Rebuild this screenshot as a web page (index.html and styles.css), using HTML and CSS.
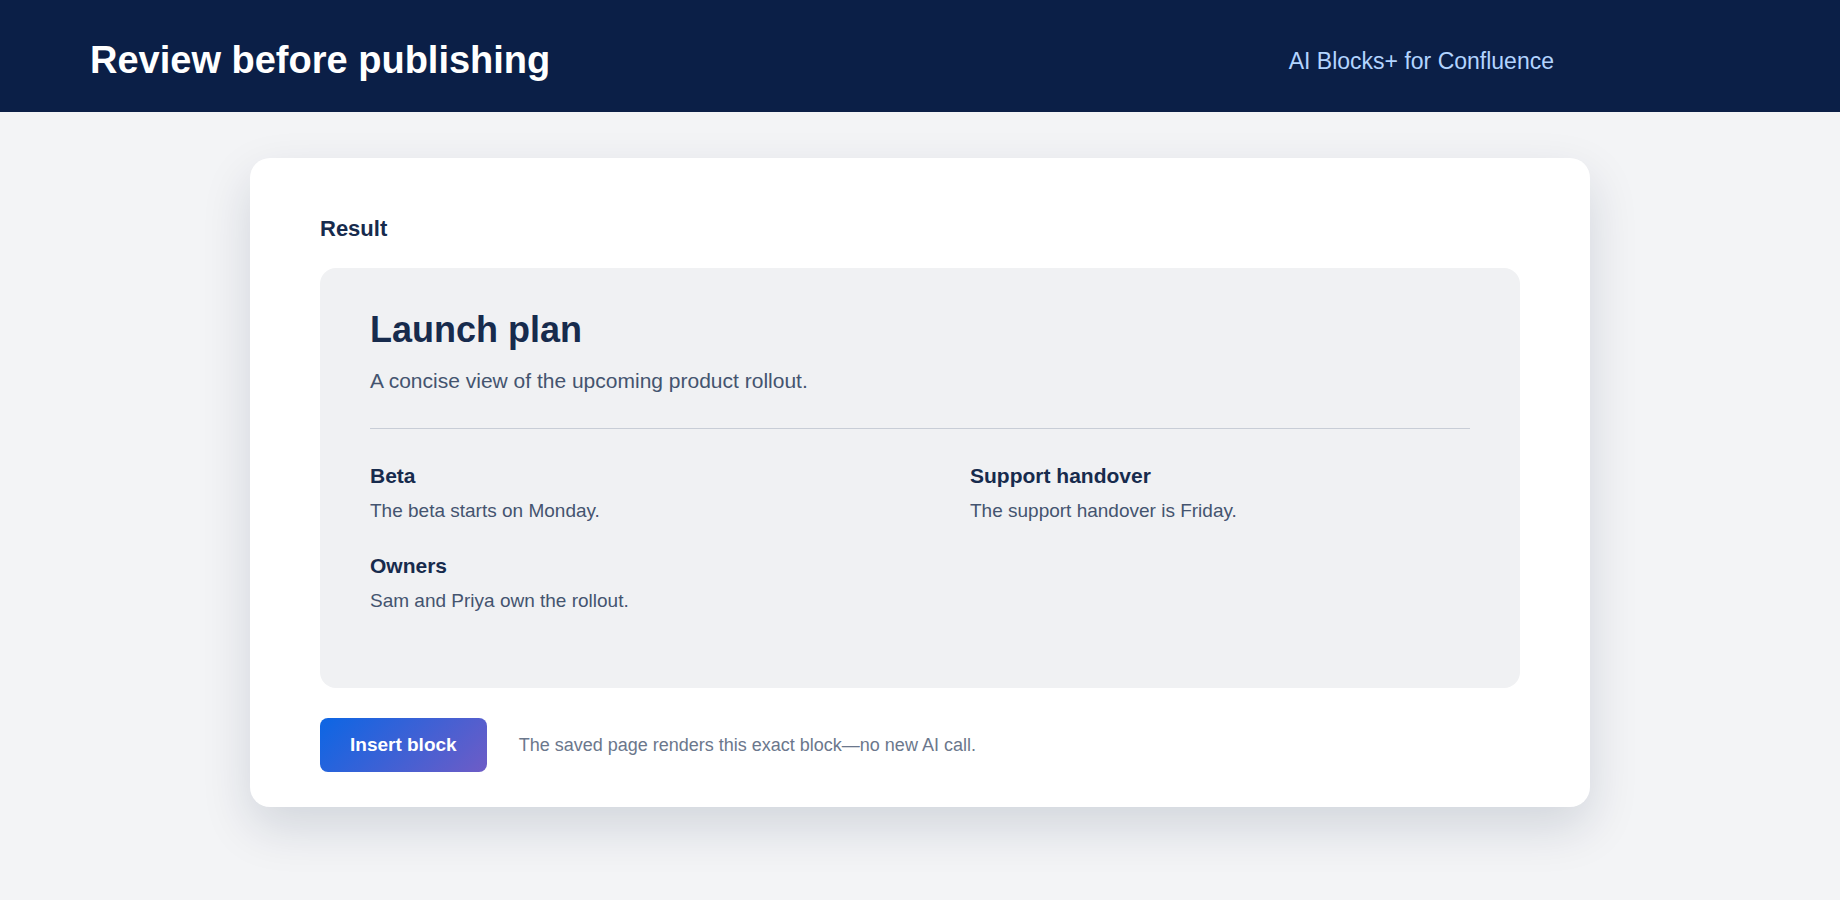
FILE: index.html
```html
<!DOCTYPE html>
<html lang="en">
<head>
    <meta charset="UTF-8">
    <meta name="viewport" content="width=device-width, initial-scale=1.0">
    <title>Review before publishing</title>
    <link rel="stylesheet" href="styles.css">
</head>
<body>

<header class="topbar">
    <h1>Review before publishing</h1>
    <span class="product">AI Blocks+ for Confluence</span>
</header>

<main class="page">
    <section class="card">
        <h2 class="label">Result</h2>

        <!-- the generated block, as it will appear on the page -->
        <div class="preview">
            <h3 class="preview-title">Launch plan</h3>
            <p class="preview-intro">A concise view of the upcoming product rollout.</p>
            <hr class="divider">

            <div class="sections">
                <div class="section">
                    <h4>Beta</h4>
                    <p>The beta starts on Monday.</p>
                </div>
                <div class="section">
                    <h4>Support handover</h4>
                    <p>The support handover is Friday.</p>
                </div>
                <div class="section">
                    <h4>Owners</h4>
                    <p>Sam and Priya own the rollout.</p>
                </div>
            </div>
        </div>

        <div class="actions">
            <button class="insert-btn">Insert block</button>
            <span class="note">The saved page renders this exact block—no new AI call.</span>
        </div>
    </section>
</main>

</body>
</html>
```

FILE: styles.css
```css
body {
    font-family: "Liberation Sans", Arial, sans-serif;
    background-color: #f3f4f6;
    margin: 0;
    min-height: 100vh;
}
.topbar {
    display: flex;
    justify-content: space-between;
    align-items: center;
    box-sizing: border-box;
    height: 112px;
    padding: 0 286px 0 90px;
    background-color: #0b1f47;
}
.topbar h1 {
    margin: 10px 0 0;
    font-size: 38px;
    line-height: 1.2;
    font-weight: bold;
    color: #fff;
}
.product {
    margin-top: 11px;
    font-size: 23px;
    line-height: 1.2;
    color: #b3d4ff;
}
.page {
    padding: 46px 0 60px;
}
.card {
    width: 1340px;
    margin: 0 auto;
    box-sizing: border-box;
    padding: 58px 70px 35px;
    background-color: #fff;
    border-radius: 20px;
    box-shadow: 0 20px 50px rgba(9, 30, 66, 0.14);
}
.label {
    margin: 0 0 26px;
    font-size: 22px;
    line-height: 26px;
    color: #172b4d;
}
.preview {
    padding: 40px 50px 75px;
    background-color: #f0f1f3;
    border-radius: 16px;
}
.preview-title {
    margin: 0;
    font-size: 36px;
    line-height: 44px;
    color: #172b4d;
}
.preview-intro {
    margin: 15px 0 0;
    font-size: 21px;
    line-height: 28px;
    color: #44546f;
}
.divider {
    margin: 33px 0 34px;
    border: none;
    border-top: 1px solid #c8cdd6;
}
.sections {
    display: grid;
    grid-template-columns: 1fr 1fr;
    column-gap: 100px;
    row-gap: 30px;
}
.section h4 {
    margin: 0 0 10px;
    font-size: 21px;
    line-height: 26px;
    color: #172b4d;
}
.section p {
    margin: 0;
    font-size: 19px;
    line-height: 24px;
    color: #44546f;
}
.actions {
    display: flex;
    align-items: center;
    gap: 32px;
    margin-top: 30px;
}
.insert-btn {
    height: 54px;
    padding: 0 30px;
    border: none;
    border-radius: 8px;
    background: linear-gradient(135deg, #0c66e4, #6e5cc6);
    color: #fff;
    font-family: inherit;
    font-size: 19px;
    font-weight: bold;
    cursor: pointer;
}
.note {
    font-size: 18px;
    color: #6b778c;
}
```
